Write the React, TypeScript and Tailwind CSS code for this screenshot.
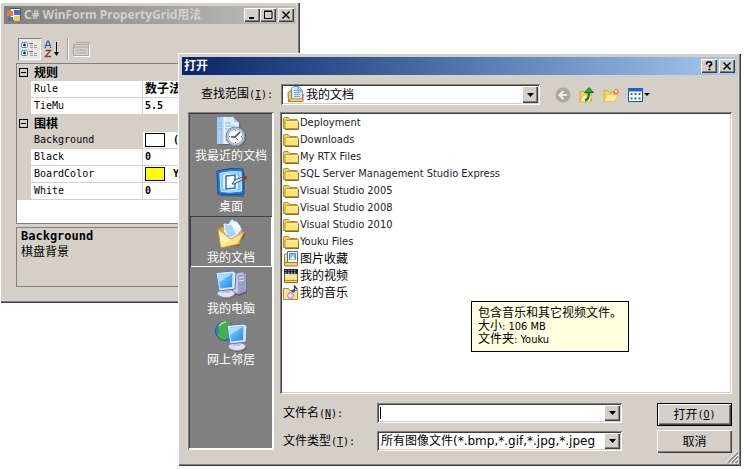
import type { ReactNode } from "react";

const MONO = "font-['DejaVu_Sans_Mono','Noto_Sans_CJK_SC',monospace]";
const UI = "font-['DejaVu_Sans_Condensed','DejaVu_Sans','Noto_Sans_CJK_SC',sans-serif]";
const RAISED = "bg-[#d4d0c8] shadow-[inset_1px_1px_0_#fff,inset_-1px_-1px_0_#404040,inset_-2px_-2px_0_#808080]";
const SUNKEN =
  "bg-white p-[2px] shadow-[inset_1px_1px_0_#808080,inset_-1px_-1px_0_#fff,inset_2px_2px_0_#404040,inset_-2px_-2px_0_#d4d0c8]";

type Prop = { name: string; value: string; color?: string; selected?: boolean };

const groups: { title: string; props: Prop[] }[] = [
  {
    title: "规则",
    props: [
      { name: "Rule", value: "数子法" },
      { name: "TieMu", value: "5.5" },
    ],
  },
  {
    title: "围棋",
    props: [
      { name: "Background", value: "(无)", color: "bg-white", selected: true },
      { name: "Black", value: "0" },
      { name: "BoardColor", value: "Yellow", color: "bg-[#ffff00]" },
      { name: "White", value: "0" },
    ],
  },
];

function FolderIcon() {
  return (
    <svg width="16" height="16" viewBox="0 0 16 16" aria-hidden="true">
      <path d="M.5 13.500V3.200Q.5 2.500 1.200 2.500h4L6.800 4.500h7q.7 0 .7.7V13z" fill="#f5cf5a" stroke="#b98a1c" />
      <path d="M2 13.500V7Q2 5.500 3.500 5.500h11q1 0 1 1v6.200q0 .8-.8.8z" fill="#ffe27a" stroke="#c4962a" />
      <path d="M3.500 7h10.500" stroke="#fff8cf" />
      <path d="M2 14.500h13.500V7" fill="none" stroke="#8a6b24" />
    </svg>
  );
}

function DocsIcon() {
  return (
    <svg width="17" height="17" viewBox="0 0 17 17" aria-hidden="true">
      <path d="M1.500 15 1 6.500 4.500 4v11z" fill="#f4c95c" stroke="#a87a24" />
      <path d="M4.500 13.500v-11l2-2h5l4 4v9z" fill="#d8ebfd" stroke="#5f92c8" />
      <path d="M11 1v4h4" fill="#b8d9f5" stroke="#5f92c8" />
      <path d="M7 4.500h3M7 6.500h6M7 8.500h6M7 10.500h6" stroke="#71a9de" />
      <path d="M1.500 15.500 4 13h11l1-5v7.500z" fill="#ffe38a" stroke="#a87a24" />
    </svg>
  );
}

function PicturesIcon() {
  return (
    <svg width="16" height="16" viewBox="0 0 16 16" aria-hidden="true">
      <path d="M1.500 14.500v-11l3-1v10h10v2z" fill="#ffe08a" stroke="#a87a24" />
      <path d="M4.500.5h10v11h-10z" fill="#f4faff" stroke="#3c6fb4" />
      <path d="M6.500 2.500h6v6h-6z" fill="#87c0f2" stroke="#5a8bc4" />
      <path d="M7 8.500 9.500 5l3 3.500z" fill="#fff" />
      <path d="M1.500 11.500h12.800l.4 3.500H1.500z" fill="#f8cf62" stroke="#a87a24" />
    </svg>
  );
}

function VideosIcon() {
  return (
    <svg width="16" height="16" viewBox="0 0 16 16" aria-hidden="true">
      <path d="M1.500 5.500h13v9h-13z" fill="#ffe07c" stroke="#86651a" />
      <path d="M1 1h14v5H1z" fill="#1b2348" />
      <path d="M2 2.500h12" stroke="#7fa2ee" strokeDasharray="1.500 1.500" />
      <path d="M2 5h12" stroke="#dfe9ff" strokeDasharray="1.500 1.500" />
      <path d="M3 8.500h10" stroke="#fff6c4" />
      <path d="M2 12.500h12" stroke="#b08a30" />
    </svg>
  );
}

function MusicIcon() {
  return (
    <svg width="16" height="16" viewBox="0 0 16 16" aria-hidden="true">
      <path d="M.5 14.500v-11h5l1.500 2h7.500v9z" fill="#ffe38a" stroke="#b3842a" />
      <circle cx="7.500" cy="10.500" r="3" fill="#eed2f0" stroke="#9e79b5" />
      <circle cx="7.500" cy="10.500" r="1" fill="#fff" />
      <path d="M11.500 6V1l3 3.500" fill="none" stroke="#2f3c8e" strokeWidth="1.400" />
      <ellipse cx="10.300" cy="6" rx="1.900" ry="1.500" fill="#3b4ba8" />
    </svg>
  );
}

const files = [
  { name: "Deployment", icon: <FolderIcon /> },
  { name: "Downloads", icon: <FolderIcon /> },
  { name: "My RTX Files", icon: <FolderIcon /> },
  { name: "SQL Server Management Studio Express", icon: <FolderIcon /> },
  { name: "Visual Studio 2005", icon: <FolderIcon /> },
  { name: "Visual Studio 2008", icon: <FolderIcon /> },
  { name: "Visual Studio 2010", icon: <FolderIcon /> },
  { name: "Youku Files", icon: <FolderIcon /> },
  { name: "图片收藏", icon: <PicturesIcon />, cjk: true },
  { name: "我的视频", icon: <VideosIcon />, cjk: true },
  { name: "我的音乐", icon: <MusicIcon />, cjk: true },
];

function Monitor({ x, y }: { x: number; y: number }) {
  return (
    <g transform={`translate(${x} ${y})`}>
      <ellipse cx="11" cy="24" rx="9" ry="4" fill="#4b4b5c" opacity=".5" />
      <ellipse cx="10" cy="22.500" rx="8.500" ry="4" fill="#e3e1f1" stroke="#9a98b8" />
      <path d="M7 16h6l1 6H6z" fill="#c1bfdc" />
      <path d="M0 1.500 17 0l3 2-1 16-16 2z" fill="#dfe6f8" stroke="#5d78ba" />
      <path d="M2 3.500 16.500 2.200 16 16 4 17.500z" fill="url(#screen)" />
      <path d="M2.500 4 16 2.700 3.500 11z" fill="#bdeaff" opacity=".75" />
    </g>
  );
}

function ScreenGradient() {
  return (
    <defs>
      <linearGradient id="screen" x1="0" y1="0" x2="1" y2="1">
        <stop offset="0" stopColor="#8fdcff" />
        <stop offset="1" stopColor="#1b86ea" />
      </linearGradient>
    </defs>
  );
}

const places: { name: string; icon: ReactNode; selected?: boolean }[] = [
  {
    name: "我最近的文档",
    icon: (
      <>
        <path d="M4 2.500 6.500 1h13l6 6v20.500l-2 1.500H4z" fill="#555" opacity=".5" />
        <path d="M2 1h16l6 6v21H2z" fill="#d8eafd" />
        <path d="M2 1h7v27H2z" fill="#a5cdf6" />
        <path d="M9 1v27M18 1v6h6" stroke="#fff" fill="#a9cdf4" />
        <path d="M10 7h6M10 10h9M10 13h5M4 7h3M4 10h3M4 13h3" stroke="#8db8ea" />
        <circle cx="22" cy="21.500" r="9.500" fill="#545d6c" opacity=".6" />
        <circle cx="20.500" cy="20.500" r="9.500" fill="#b5c2d0" stroke="#7889a0" />
        <circle cx="20.500" cy="20.500" r="7.500" fill="#f8fcff" stroke="#98acc4" />
        <path d="M20.500 14v1M20.500 26v1M14 20.500h1M26 20.500h1" stroke="#667" />
        <path d="m25 16-5 5h-4" fill="none" stroke="#344d83" strokeWidth="1.500" />
        <path d="m20 21 3 3" stroke="#d65b31" />
      </>
    ),
  },
  {
    name: "桌面",
    icon: (
      <>
        <path d="m4 4 26 1-1 25-24-1z" fill="#444" opacity=".5" />
        <path d="M2 4Q15 0 28 2l1 25Q15 29 3 27z" fill="#1c7fe0" stroke="#0e4caa" />
        <path d="M5 6.500Q15 3.500 26 5l.5 19Q15 26 6 24.500z" fill="#87c9fa" stroke="#d3eeff" />
        <path d="M8 10Q8 6.500 12 6.500h6q5 0 5 4v9q0 4-5 4h-5q-5 0-5-4z" fill="#e3f4ff" />
        <path d="m11 9 9-1v13l-9 1z" fill="#fff" stroke="#2f75c5" strokeWidth="1.500" />
        <path d="m17 17 3-4 8-3-1 3-8 4z" fill="#ecf2f8" stroke="#3a516e" />
        <path d="m27 10 5-1v3l-5 2z" fill="#a3322a" />
      </>
    ),
  },
  {
    name: "我的文档",
    selected: true,
    icon: (
      <>
        <path d="m5 29 19-1 7-13-4 1z" fill="#444" opacity=".5" />
        <path d="m3 11 8-4 17 6-3 13-18 3z" fill="#e7ab38" stroke="#b77d1c" />
        <path d="m8 13 9-12 10 10-9 12z" fill="#dff0ff" stroke="#8cb5e4" />
        <path d="m9 6 8 1 5 10-10 4z" fill="#acd2fa" stroke="#e9f6ff" />
        <path d="m16 5 5-2 5 6-5 3z" fill="#f5fbff" />
        <path d="m3 11 13 10 13-7-6 12-17 4z" fill="#ffe08b" stroke="#d49c33" />
        <path d="m4 13 11 9-9 6z" fill="#fff0b5" />
      </>
    ),
  },
  {
    name: "我的电脑",
    icon: (
      <>
        <ScreenGradient />
        <path d="m19 5 11-1 2 3v17l-8 3-5-2z" fill="#444" opacity=".5" />
        <path d="m18 5 9-2 4 2v17l-8 3-5-2z" fill="#c9c9e3" stroke="#8383ae" />
        <path d="m23 6 8-1v17l-8 3z" fill="#9c9fca" />
        <path d="m24 9 5-1M24 12l5-1" stroke="#e9e9ff" />
        <circle cx="28" cy="17" r="1" fill="#65d85e" />
        <Monitor x={1} y={2} />
      </>
    ),
  },
  {
    name: "网上邻居",
    icon: (
      <>
        <circle cx="10" cy="11" r="9.500" fill="#2f83dc" stroke="#1c56a0" />
        <path d="M3 6q6-7 12-4l1 5-5 2 3 5-4 6q-6-1-8-5l3-3z" fill="#41b53d" />
        <path d="M4 6q3-4 7-4" stroke="#a4e89a" strokeWidth="1.500" fill="none" />
        <Monitor x={12} y={4} />
      </>
    ),
  },
];

function DropArrow() {
  return (
    <span
      aria-hidden="true"
      className={`pointer-events-none absolute inset-y-[2px] right-[2px] flex w-4 items-center justify-center ${RAISED}`}
    >
      <svg width="7" height="4" viewBox="0 0 7 4">
        <path d="M0 0h7L3.500 4z" fill="#000" />
      </svg>
    </span>
  );
}

function CaptionButton({ label, children }: { label: string; children: ReactNode }) {
  return (
    <button type="button" aria-label={label} className={`flex h-[14px] w-4 items-center justify-center ${RAISED}`}>
      <svg width="10" height="10" viewBox="0 0 10 10" fill="none" stroke="#000">
        {children}
      </svg>
    </button>
  );
}

function Latin({ children }: { children: ReactNode }) {
  return <span className={`text-[10px] ${MONO}`}>{children}</span>;
}

function PropertyTable() {
  return (
    <div className="h-[161px] border border-[#808080] bg-white">
      <table className="w-full table-fixed border-separate border-spacing-0 text-left text-[12px] leading-4">
        <colgroup>
          <col className="w-[14px]" />
          <col className="w-[112px]" />
          <col />
        </colgroup>
        {groups.map((group) => (
          <tbody key={group.title}>
            <tr className="h-[17px] bg-[#d4d0c8]">
              <td className="p-0">
                <button
                  type="button"
                  aria-label={`折叠 ${group.title}`}
                  className="ml-[2px] flex size-[9px] items-center justify-center border border-black"
                >
                  <span className="h-px w-[5px] bg-black" />
                </button>
              </td>
              <th colSpan={2} scope="rowgroup" className="p-0 pl-[3px] font-bold">
                {group.title}
              </th>
            </tr>
            {group.props.map((p) => (
              <tr key={p.name} className="h-[17px]">
                <td className="bg-[#d4d0c8] p-0" />
                <th
                  scope="row"
                  className={`border-r border-b border-[#d4d0c8] p-0 pl-[3px] font-normal ${p.selected ? "bg-[#d4d0c8]" : ""}`}
                >
                  <span className="flex h-4 items-end">
                    <Latin>{p.name}</Latin>
                  </span>
                </th>
                <td className="border-b border-[#d4d0c8] p-0 pl-px font-bold">
                  <span className="flex h-4 items-center gap-2 pl-px">
                    {p.color && <span className={`h-[14px] w-5 border border-black ${p.color}`} />}
                    {p.value === "数子法" ? p.value : <Latin>{p.value}</Latin>}
                  </span>
                </td>
              </tr>
            ))}
          </tbody>
        ))}
      </table>
    </div>
  );
}

function MainWindow() {
  return (
    <section className={`absolute top-[2px] left-0 w-[300px] p-1 ${RAISED}`}>
      <header className="flex h-[18px] items-center bg-linear-to-r from-[#808080] to-[#c0c0c0] pr-[2px] pl-[3px]">
        <svg width="14" height="14" viewBox="0 0 14 14" aria-hidden="true">
          <path d="M3 .5h10.500v12H3z" fill="#f7f7f7" stroke="#555" />
          <path d="M0 3h6v5H0z" fill="#e5793a" />
          <path d="M7 2h6v5H7z" fill="#3d72cf" />
          <path d="M1 9h5v4H1z" fill="#4d6eb8" />
          <path d="M7 8h6v5H7z" fill="#f7cf3f" />
        </svg>
        <h1 className="ml-[3px] flex-1 truncate text-[12px] leading-4 font-bold text-[#d4d0c8]">
          C# WinForm PropertyGrid用法
        </h1>
        <CaptionButton label="最小化">
          <path d="M2 8h5" strokeWidth="2" />
        </CaptionButton>
        <CaptionButton label="最大化">
          <path d="M1 1h8M1 1.500h8v7H1.500V1" />
        </CaptionButton>
        <span className="w-[2px]" />
        <CaptionButton label="关闭">
          <path d="m1.500 1.500 7 7m0-7-7 7" strokeWidth="1.500" />
        </CaptionButton>
      </header>
      <div className="px-3 pt-[14px] pb-3">
        <div className="flex h-[25px] items-start pl-[2px]">
          <button
            type="button"
            aria-label="按分类顺序"
            className="flex h-[22px] w-[23px] items-center justify-center bg-[#e9e7e2] shadow-[inset_1px_1px_0_#808080,inset_-1px_-1px_0_#fff]"
          >
            <svg width="17" height="16" viewBox="0 0 17 16" fill="none">
              <rect x=".5" y="1.500" width="6" height="5" rx="1" fill="#fff" stroke="#5c86b5" />
              <rect x=".5" y="9.500" width="6" height="5" rx="1" fill="#fff" stroke="#5c86b5" />
              <path d="M2 4h3M3.500 2.500v3M2 12h3M3.500 10.500v3" stroke="#12316b" strokeWidth="1.400" />
              <path d="M8 2.500h4M8 10.500h4" stroke="#666" />
              <path d="M9 4.500h3M13 4.500h3M9 6.500h3M13 6.500h3M9 12.500h3M13 12.500h3M9 14.500h3M13 14.500h3" stroke="#a0a0a0" />
            </svg>
          </button>
          <button type="button" aria-label="按字母顺序" className="ml-[3px] flex h-[22px] w-[18px] items-center">
            <svg width="16" height="18" viewBox="0 0 16 18" fill="none">
              <path d="m1 8 2.500-7h1L7 8M2 5.500h4" stroke="#3457a8" strokeWidth="1.200" />
              <path d="M1.500 10.500h5l-5 6H7" stroke="#963634" strokeWidth="1.300" />
              <path d="M12.500 2v12" stroke="#000" />
              <path d="M10 12h5l-2.500 4z" fill="#000" />
            </svg>
          </button>
          <span className="ml-[5px] h-[22px] w-[2px] border-r border-l border-r-white border-l-[#a0a0a0]" />
          <button type="button" disabled aria-label="属性页" className="ml-1 flex h-[22px] w-[18px] items-center">
            <svg width="17" height="15" viewBox="0 0 17 15" fill="none" stroke="#aaa7a0">
              <path d="M.5 2.500h15v11H.5zM3 .5h13v2M.5 5h15" />
              <path d="M3 8h2M6 8h7M3 11h2M6 11h7" />
              <path d="M16.500 3v11.500H1" stroke="#fff" />
            </svg>
          </button>
        </div>
        <PropertyTable />
        <div className="mt-[3px] h-[60px] border border-[#808080] pt-[1px] pl-1 text-[12px] leading-[15px]">
          <p className={`font-bold ${MONO}`}>Background</p>
          <p>棋盘背景</p>
        </div>
      </div>
    </section>
  );
}

function ToolIcons() {
  return (
    <div className="flex items-center gap-2">
      <button type="button" aria-label="后退">
        <svg width="16" height="16" viewBox="0 0 16 16">
          <circle cx="8" cy="8" r="7.500" fill="#a9a7a2" />
          <path d="M12 8H5m3.500-4L4.500 8l4 4" fill="none" stroke="#efede8" strokeWidth="2" />
        </svg>
      </button>
      <button type="button" aria-label="向上一级">
        <svg width="16" height="16" viewBox="0 0 16 16">
          <path d="M1 14.500v-10h4l1.500 2h6v8z" fill="#fbd468" stroke="#d6a637" />
          <path d="m1 15 3-7h9l-2 7z" fill="#fff0a4" stroke="#e0b64a" />
          <path d="M6 13.500q4-1 4-8" fill="none" stroke="#168c28" strokeWidth="2.500" />
          <path d="m5.500 5.500 4.500-5 4.500 5z" fill="#27a936" stroke="#12701d" />
        </svg>
      </button>
      <button type="button" aria-label="新建文件夹">
        <svg width="17" height="16" viewBox="0 0 17 16">
          <path d="M1 14V3.500h4l1.500 2H12V14z" fill="#f9cf60" stroke="#e0ae3e" />
          <path d="m1 14.500 3-7h11l-3 7z" fill="#fff0a8" stroke="#ebc45a" />
          <path d="m13 1 .8 1.700 2-.3-.8 1.800 1.500 1.300-2 .6-.3 2-1.600-1.200-1.800.9.200-2-1.600-1.200 2-.6z" fill="#f0764a" />
          <circle cx="13" cy="4.500" r="1.200" fill="#ffe7c8" />
        </svg>
      </button>
      <button type="button" aria-label="查看菜单" className="flex items-center gap-px">
        <svg width="15" height="14" viewBox="0 0 15 14">
          <path d="M.5.5h14v13H.5z" fill="#fff" stroke="#1a4fae" />
          <path d="M0 0h15v3.500H0z" fill="#1f62d4" />
          <path d="M2.500 6h2M6.500 6h2M10.500 6h2M2.500 10.500h2M6.500 10.500h2M10.500 10.500h2" stroke="#3d6b8d" strokeWidth="2" />
        </svg>
        <svg width="6" height="3" viewBox="0 0 6 3">
          <path d="M0 0h6L3 3z" />
        </svg>
      </button>
    </div>
  );
}

function OpenDialog() {
  return (
    <section
      role="dialog"
      aria-label="打开文件"
      className={`absolute top-[53px] right-[3px] left-[178px] min-w-[540px] p-1 ${RAISED}`}
    >
      <header className="flex h-[18px] items-center bg-linear-to-r from-[#0a246a] to-[#a6caf0] pr-[2px] pl-[2px]">
        <h2 className="flex-1 text-[12px] leading-4 font-bold text-white">打开</h2>
        <CaptionButton label="帮助">
          <path d="M2.500 3.500V2.200L3.500 1h3l1 1v1.500l-2 1.500v1.500M4.500 8.500h2" strokeWidth="1.600" />
        </CaptionButton>
        <span className="w-[2px]" />
        <CaptionButton label="关闭">
          <path d="m1.500 1.500 7 7m0-7-7 7" strokeWidth="1.500" />
        </CaptionButton>
      </header>

      <div className="mt-[9px] flex h-[21px] items-center pr-[87px] pl-[19px]">
        <label htmlFor="look-in" className="w-20 text-[12px] leading-4">
          查找范围<Latin>(<u>I</u>):</Latin>
        </label>
        <div className={`relative mr-[15px] h-full flex-1 ${SUNKEN}`}>
          <select id="look-in" className="block h-full w-full appearance-none pl-[23px] text-[12px] leading-4">
            <option>我的文档</option>
            <option>桌面</option>
          </select>
          <span className="pointer-events-none absolute top-[2px] left-[6px]">
            <DocsIcon />
          </span>
          <DropArrow />
        </div>
        <ToolIcons />
      </div>

      <div className="mt-[7px] flex gap-[6px] pr-[5px] pb-[9px] pl-[6px]">
        <nav
          aria-label="位置"
          className="mb-[3px] w-[86px] bg-[#808080] p-[2px] shadow-[inset_1px_1px_0_#808080,inset_-2px_-2px_0_#fff,inset_2px_2px_0_#404040]"
        >
          {places.map((place) => (
            <button
              key={place.name}
              type="button"
              className={`flex h-[51px] w-full flex-col items-center pt-[2px] text-[12px] leading-[15px] text-white ${
                place.selected ? "shadow-[inset_1px_1px_0_#404040,inset_-1px_-1px_0_#fff]" : ""
              }`}
            >
              <svg width="32" height="32" viewBox="0 0 32 32" fill="none" aria-hidden="true">
                {place.icon}
              </svg>
              {place.name}
            </button>
          ))}
        </nav>

        <div className="min-w-0 flex-1">
          <div className={`relative h-[282px] ${SUNKEN}`}>
            <ul className="pl-px">
              {files.map((file) => (
                <li key={file.name} className="flex h-[17px] items-center gap-px">
                  {file.icon}
                  <span className={file.cjk ? "text-[12px] leading-4" : `text-[11px] leading-4 text-[#1c1c2c] ${UI}`}>
                    {file.name}
                  </span>
                </li>
              ))}
            </ul>
            <div
              role="tooltip"
              className={`absolute top-[189px] left-[191px] w-[158px] border border-black bg-[#ffffe1] px-[6px] py-[5px] text-[11px] leading-[13px] ${UI}`}
            >
              <p className="text-[12px] whitespace-nowrap">包含音乐和其它视频文件。</p>
              <p>
                <span className="text-[12px]">大小</span>: 106 MB
              </p>
              <p>
                <span className="text-[12px]">文件夹</span>: Youku
              </p>
            </div>
          </div>

          <form className="mt-[9px] flex gap-[35px]" onSubmit={(e) => e.preventDefault()}>
            <div className="flex min-w-0 flex-1 flex-col gap-2 pl-[3px]">
              <div className="flex h-5 items-center">
                <label htmlFor="file-name" className="w-[94px] text-[12px] leading-4">
                  文件名<Latin>(<u>N</u>):</Latin>
                </label>
                <div className={`relative h-full min-w-0 flex-1 ${SUNKEN}`}>
                  <input
                    id="file-name"
                    type="text"
                    autoComplete="off"
                    className="block h-full w-full pr-5 pl-[2px] text-[12px] outline-none"
                  />
                  <span aria-hidden="true" className="absolute top-1 left-[3px] h-3 w-px bg-black" />
                  <DropArrow />
                </div>
              </div>
              <div className="flex h-5 items-center">
                <label htmlFor="file-type" className="w-[94px] text-[12px] leading-4">
                  文件类型<Latin>(<u>T</u>):</Latin>
                </label>
                <div className={`relative h-full min-w-0 flex-1 ${SUNKEN}`}>
                  <select
                    id="file-type"
                    className="block h-full w-full appearance-none overflow-hidden pr-4 pl-[2px] font-['DejaVu_Sans','Noto_Sans_CJK_SC',sans-serif] text-[12px] leading-4"
                  >
                    <option>所有图像文件(*.bmp,*.gif,*.jpg,*.jpeg</option>
                  </select>
                  <DropArrow />
                </div>
              </div>
            </div>
            <div className="flex w-[75px] flex-col gap-1">
              <button type="submit" className="h-[23px] border border-black bg-black text-[12px] leading-4">
                <span className={`flex h-full items-center justify-center ${RAISED}`}>
                  打开<Latin>(<u>O</u>)</Latin>
                </span>
              </button>
              <button type="button" className={`h-[23px] text-[12px] leading-4 ${RAISED}`}>
                取消
              </button>
            </div>
          </form>
        </div>
      </div>
      <svg className="absolute right-[3px] bottom-[3px]" width="12" height="12" viewBox="0 0 12 12" aria-hidden="true">
        <path d="M0 12 12 0M4 12l8-8M8 12l4-4" stroke="#fff" />
        <path d="M1.500 12 12 1.500M5.500 12 12 5.500M9.500 12 12 9.500" stroke="#808080" strokeWidth="1.400" />
      </svg>
    </section>
  );
}

export default function App() {
  return (
    <main className="relative h-screen overflow-hidden bg-white font-['Noto_Sans','Noto_Sans_CJK_SC',sans-serif] text-black">
      <MainWindow />
      <OpenDialog />
    </main>
  );
}
